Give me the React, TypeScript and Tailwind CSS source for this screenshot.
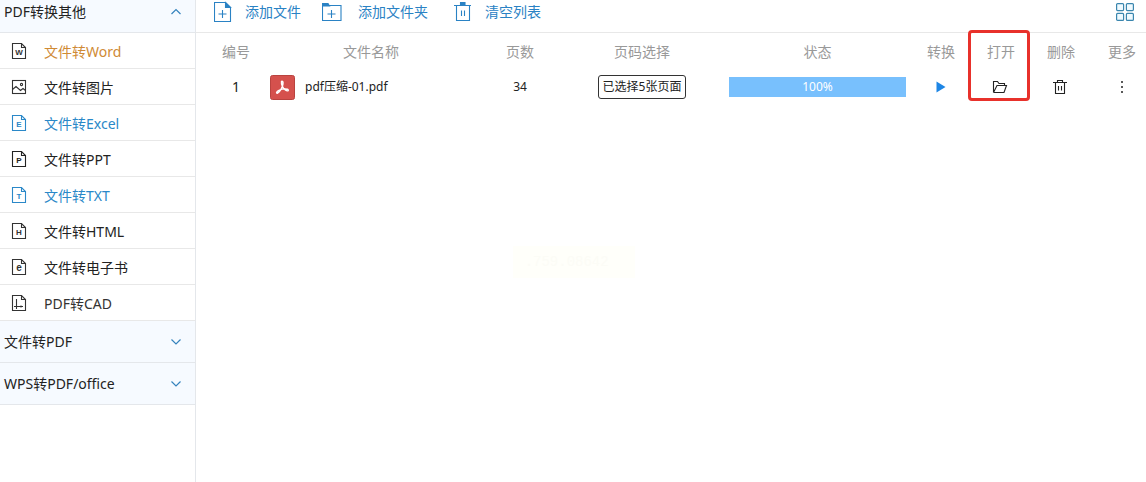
import { useState } from 'react';
import type { ReactNode } from 'react';
import clsx from 'clsx';

const formats = [
  { label: '文件转Word', glyph: 'W', color: 'text-[#cf8a35]', iconColor: 'text-[#333]' },
  { label: '文件转图片', glyph: 'image', color: 'text-[#222]', iconColor: 'text-[#333]' },
  { label: '文件转Excel', glyph: 'E', color: 'text-[#2a88c8]', iconColor: 'text-[#2a88c8]' },
  { label: '文件转PPT', glyph: 'P', color: 'text-[#222]', iconColor: 'text-[#222]' },
  { label: '文件转TXT', glyph: 'T', color: 'text-[#2a88c8]', iconColor: 'text-[#2a88c8]' },
  { label: '文件转HTML', glyph: 'H', color: 'text-[#222]', iconColor: 'text-[#333]' },
  { label: '文件转电子书', glyph: 'e', color: 'text-[#222]', iconColor: 'text-[#333]' },
  { label: 'PDF转CAD', glyph: 'cad', color: 'text-[#333]', iconColor: 'text-[#333]' },
];

const files = [{ id: 1, name: 'pdf压缩-01.pdf', pages: 34, selected: '已选择5张页面', progress: 100 }];

function FormatIcon({ glyph }: { glyph: string }) {
  if (glyph === 'image') {
    return (
      <svg width="16" height="16" viewBox="0 0 16 16" fill="none" stroke="currentColor" strokeWidth="1.1">
        <rect x="1.5" y="1.5" width="13" height="13" />
        <path d="M1.5 10.5 5 7.5 9.5 11.5 12 9.5 14.5 11.5" />
        <circle cx="10.5" cy="5.5" r="1.1" />
      </svg>
    );
  }
  return (
    <svg width="16" height="18" viewBox="0 0 16 18" fill="none" stroke="currentColor" strokeWidth="1.1">
      <path d="M1.5 1.5H10.5L14.5 5.5V16.5H1.5Z" />
      <path d="M10.5 1.5V5.5H14.5" />
      {glyph === 'cad' ? (
        <path d="M5.5 5V15M3 12.5H12M5.5 9.5V12.5M10 11.5V13.5" />
      ) : (
        <text
          x="8"
          y="13"
          textAnchor="middle"
          fill="currentColor"
          stroke="none"
          className={clsx("font-['Liberation_Sans',sans-serif] font-bold", glyph === 'e' ? 'text-[10px]' : 'text-[8px]')}
        >
          {glyph}
        </text>
      )}
    </svg>
  );
}

function Chevron({ up }: { up?: boolean }) {
  return (
    <svg width="12" height="8" viewBox="0 0 12 8" fill="none" stroke="#3583bd" strokeWidth="1.2">
      <path d={up ? 'M1.5 6 6 1.5 10.5 6' : 'M1.5 1.5 6 6 10.5 1.5'} />
    </svg>
  );
}

function TrashIcon() {
  return (
    <svg width="14" height="16" viewBox="0 0 14 16" fill="none" stroke="currentColor" strokeWidth="1.1">
      <path d="M0 3.5H14M4.5 3.5V1.5H9.5V3.5M2.5 3.5V14.5H11.5V3.5M5.5 7V11.5M8.5 7V11.5" />
    </svg>
  );
}

function FolderIcon() {
  return (
    <svg width="16" height="14" viewBox="0 0 16 14" fill="none" stroke="currentColor" strokeWidth="1.1">
      <path d="M1.5 12.5V1.5H5.5L7 3.5H12.5V5.5M1.5 12.5H12L14.5 5.5H5L1.5 12.5" />
    </svg>
  );
}

function PdfIcon() {
  return (
    <svg width="25" height="25" viewBox="0 0 25 25" className="shrink-0">
      <rect x="0.5" y="0.5" width="24" height="24" rx="2" fill="#d5514d" stroke="#b9433f" />
      <path
        d="M11.5 6.5C13.5 5.5 13.3 8.5 12.3 11.5C11.3 14 9.3 17.3 7.5 18.2C5.8 18.4 6.5 16.5 9 15.3C11.5 14.2 15 13.6 17.5 14.2C19.5 15.5 17.5 16.8 15.3 14.9C13 13.4 11 9.5 11.5 6.5Z"
        fill="none"
        stroke="#fff"
        strokeWidth="1.4"
      />
    </svg>
  );
}

function ToolButton({ icon, children }: { icon: ReactNode; children: ReactNode }) {
  return (
    <button type="button" className="flex items-center text-[#2a82c4]">
      {icon}
      {children}
    </button>
  );
}

function GroupHeader({ title, open, onClick, first }: { title: string; open: boolean; onClick: () => void; first?: boolean }) {
  return (
    <button
      type="button"
      onClick={onClick}
      aria-expanded={open}
      className={clsx(
        'flex w-full items-center justify-between border-b border-[#e4e7eb] bg-[#f6faff] pl-1 pr-[13px] text-[#222]',
        first ? 'h-[33px] pb-2' : 'h-[42px]',
      )}
    >
      {title}
      <Chevron up={open} />
    </button>
  );
}

export default function App() {
  const [open, setOpen] = useState(true);

  return (
    <div className="flex min-h-screen bg-white font-['Noto_Sans','Noto_Sans_CJK_SC',sans-serif] text-sm text-[#222]">
      <aside className="w-[196px] shrink-0 border-r border-[#e4e7eb]">
        <GroupHeader title="PDF转换其他" open={open} onClick={() => setOpen(!open)} first />
        {open && (
          <ul>
            {formats.map((f) => (
              <li key={f.label} className="border-b border-[#e8e8e8]">
                <button type="button" className={clsx('flex h-[35px] w-full items-center gap-4 pl-[11px]', f.color)}>
                  <span className={clsx('flex w-4 justify-center', f.iconColor)}>
                    <FormatIcon glyph={f.glyph} />
                  </span>
                  <span className="pl-px pt-0.5">{f.label}</span>
                </button>
              </li>
            ))}
          </ul>
        )}
        <GroupHeader title="文件转PDF" open={false} onClick={() => {}} />
        <GroupHeader title="WPS转PDF/office" open={false} onClick={() => {}} />
      </aside>

      <main className="relative min-w-0 flex-1">
        <header className="flex h-[33px] items-center border-b border-[#e8e8e8] pb-2 pl-[18px] pr-3">
          <div className="flex flex-1 items-center gap-[21px]">
            <ToolButton
              icon={
                <svg width="18" height="22" viewBox="0 0 18 22" fill="none" stroke="currentColor" strokeWidth="1.1" className="mr-[13px]">
                  <path d="M0.5 1.5H11.5L16.5 6.5V20.5H0.5ZM8.5 9V17M4.5 13H12.5" />
                  <path d="M11.5 1.5V6.5H16.5Z" fill="currentColor" />
                </svg>
              }
            >
              添加文件
            </ToolButton>
            <ToolButton
              icon={
                <svg width="20" height="20" viewBox="0 0 20 20" fill="none" stroke="currentColor" strokeWidth="1.1" className="mr-4">
                  <path d="M0.5 3.5H19V18.5H0.5ZM9.5 8V16M5.5 12H13.5" />
                  <path d="M0.5 1.5H6L7.5 4H0.5Z" fill="currentColor" />
                </svg>
              }
            >
              添加文件夹
            </ToolButton>
            <ToolButton
              icon={
                <svg width="18" height="20" viewBox="0 0 18 20" fill="none" stroke="currentColor" strokeWidth="1.1" className="ml-[5px] mr-[13px]">
                  <path d="M0 3.5H17M2.5 3.5V18.5H15.5V3.5M7.5 8.5V14M10.5 8.5V14" />
                  <path d="M6.5 0.5H11V3.5H6.5Z" fill="currentColor" />
                </svg>
              }
            >
              清空列表
            </ToolButton>
          </div>
          <button type="button" aria-label="视图" className="text-[#3a86ae]">
            <svg width="18" height="18" viewBox="0 0 18 18" fill="#effaff" stroke="currentColor" strokeWidth="1.2">
              <rect x="0.6" y="0.6" width="7" height="7" rx="1" />
              <rect x="10.4" y="0.6" width="7" height="7" rx="1" />
              <rect x="0.6" y="10.4" width="7" height="7" rx="1" />
              <rect x="10.4" y="10.4" width="7" height="7" rx="1" />
            </svg>
          </button>
        </header>

        <div className="pl-[14px]">
          <table className="w-full table-fixed text-center">
            <thead>
              <tr className="h-[38px] text-[#999]">
                <th className="w-[52px] font-normal">编号</th>
                <th className="w-[218px] font-normal">文件名称</th>
                <th className="w-[80px] font-normal">页数</th>
                <th className="w-[164px] font-normal">页码选择</th>
                <th className="font-normal">状态</th>
                <th className="w-[60px] font-normal">转换</th>
                <th className="relative w-[60px] font-normal">
                  打开
                  <span className="pointer-events-none absolute -left-[3px] -top-[3px] h-[71px] w-[62px] rounded border-[3px] border-[#e8312b]" />
                </th>
                <th className="w-[60px] font-normal">删除</th>
                <th className="w-[55px] pr-2.5 text-right font-normal">更多</th>
              </tr>
            </thead>
            <tbody>
              {files.map((file) => (
                <tr key={file.id} className="h-8 text-xs">
                  <td className="text-sm">{file.id}</td>
                  <td className="pl-2">
                    <div className="flex items-center gap-2.5">
                      <PdfIcon />
                      {file.name}
                    </div>
                  </td>
                  <td>{file.pages}</td>
                  <td>
                    <button type="button" className="h-6 rounded-[3px] border border-[#333] px-1 align-middle">
                      {file.selected}
                    </button>
                  </td>
                  <td className="px-[5px]">
                    <div className="bg-[#ddeeff]">
                      <div className="h-5 bg-[#78c0fd] leading-5 text-white" style={{ width: `${file.progress}%` }}>
                        {file.progress}%
                      </div>
                    </div>
                  </td>
                  <td>
                    <button type="button" aria-label="转换" className="block w-full text-[#1e86e5]">
                      <svg width="10" height="12" viewBox="0 0 10 12" fill="currentColor" className="mx-auto">
                        <path d="M0.5 0.5 9.5 6 0.5 11.5Z" />
                      </svg>
                    </button>
                  </td>
                  <td className="pr-0.5">
                    <button type="button" aria-label="打开" className="flex w-full justify-center">
                      <FolderIcon />
                    </button>
                  </td>
                  <td className="pr-0.5">
                    <button type="button" aria-label="删除" className="flex w-full justify-center">
                      <TrashIcon />
                    </button>
                  </td>
                  <td className="pr-2.5">
                    <button type="button" aria-label="更多" className="ml-auto flex w-7 justify-center">
                      <svg width="4" height="14" viewBox="0 0 4 14" fill="currentColor">
                        <circle cx="2" cy="2" r="1" />
                        <circle cx="2" cy="7" r="1" />
                        <circle cx="2" cy="12" r="1" />
                      </svg>
                    </button>
                  </td>
                </tr>
              ))}
            </tbody>
          </table>
        </div>

        <div className="absolute left-1/3 top-[246px] w-[122px] bg-[#fffffa] pl-3 font-['Liberation_Mono',monospace] leading-8 text-[#fcfcf6]">
          .759.08642
        </div>
      </main>
    </div>
  );
}
